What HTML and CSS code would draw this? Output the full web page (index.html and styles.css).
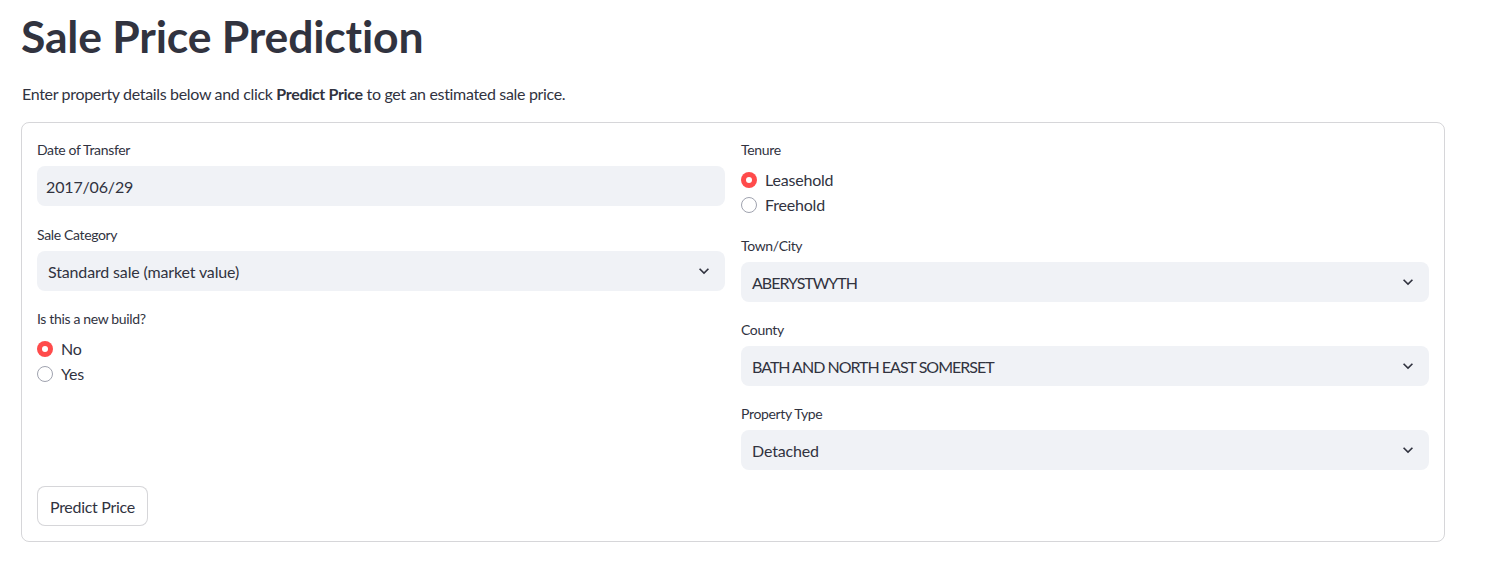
FILE: index.html
```html
<!DOCTYPE html>
<html lang="en">
<head>
<meta charset="utf-8">
<title>Sale Price Prediction</title>
<link rel="stylesheet" href="styles.css">
</head>
<body>
<main class="page">
  <h1 class="title">Sale Price Prediction</h1>
  <p class="intro">Enter property details below and click <strong>Predict Price</strong> to get an estimated sale price.</p>
  <form class="form-card">
    <div class="columns">
      <div class="col">
        <div class="field field-date">
          <div class="label">Date of Transfer</div>
          <div class="input input-date">2017/06/29</div>
        </div>
        <div class="field">
          <div class="label">Sale Category</div>
          <div class="input select">
            <span>Standard sale (market value)</span>
            <svg class="chev" viewBox="0 0 24 24" width="20" height="20"><path d="M16.59 8.59L12 13.17 7.41 8.59 6 10l6 6 6-6z"/></svg>
          </div>
        </div>
        <div class="field">
          <div class="label">Is this a new build?</div>
          <div class="options">
            <div class="option"><span class="radio checked"></span><span>No</span></div>
            <div class="option"><span class="radio"></span><span>Yes</span></div>
          </div>
        </div>
      </div>
      <div class="col">
        <div class="field">
          <div class="label">Tenure</div>
          <div class="options">
            <div class="option"><span class="radio checked"></span><span>Leasehold</span></div>
            <div class="option"><span class="radio"></span><span>Freehold</span></div>
          </div>
        </div>
        <div class="field">
          <div class="label">Town/City</div>
          <div class="input select">
            <span class="caps">ABERYSTWYTH</span>
            <svg class="chev" viewBox="0 0 24 24" width="20" height="20"><path d="M16.59 8.59L12 13.17 7.41 8.59 6 10l6 6 6-6z"/></svg>
          </div>
        </div>
        <div class="field">
          <div class="label">County</div>
          <div class="input select">
            <span class="caps">BATH AND NORTH EAST SOMERSET</span>
            <svg class="chev" viewBox="0 0 24 24" width="20" height="20"><path d="M16.59 8.59L12 13.17 7.41 8.59 6 10l6 6 6-6z"/></svg>
          </div>
        </div>
        <div class="field">
          <div class="label">Property Type</div>
          <div class="input select">
            <span>Detached</span>
            <svg class="chev" viewBox="0 0 24 24" width="20" height="20"><path d="M16.59 8.59L12 13.17 7.41 8.59 6 10l6 6 6-6z"/></svg>
          </div>
        </div>
      </div>
    </div>
    <div class="actions">
      <button type="button" class="btn">Predict Price</button>
    </div>
  </form>
</main>
</body>
</html>
```

FILE: styles.css
```css
* {
  box-sizing: border-box;
}

html, body {
  margin: 0;
  background: #ffffff;
}

body {
  font-family: Lato, "Noto Sans", sans-serif;
  color: rgb(49, 51, 63);
  font-size: 16px;
  letter-spacing: -0.2px;
}

.page {
  padding: 0 50px 0 21px;
}

.title {
  margin: 0;
  padding-top: 10px;
  font-size: 44.5px;
  line-height: 52px;
  font-weight: 700;
  letter-spacing: -0.2px;
}

.intro {
  margin: 20px 0 0 1px;
  line-height: 24px;
  font-size: 16px;
  letter-spacing: -0.33px;
}

.intro strong {
  font-weight: 700;
}

.form-card {
  margin-top: 16px;
  border: 1px solid rgba(49, 51, 63, 0.2);
  border-radius: 8px;
  padding: 15px;
  display: flex;
  flex-direction: column;
  gap: 16px;
}

.columns {
  display: grid;
  grid-template-columns: 1fr 1fr;
  gap: 16px;
  align-items: start;
}

.col {
  display: flex;
  flex-direction: column;
  gap: 16px;
}

.field-date {
  margin-bottom: 1px;
}

.label {
  height: 28px;
  font-size: 14px;
  line-height: 24px;
  letter-spacing: -0.35px;
}

.input {
  height: 40px;
  background: #f0f2f6;
  border-radius: 8px;
  display: flex;
  align-items: center;
  font-size: 16px;
  letter-spacing: -0.15px;
}

.input-date {
  padding-left: 9px;
}

.select {
  padding: 0 11px 0 11px;
  justify-content: space-between;
}

.caps {
  letter-spacing: -1px;
}

.chev {
  fill: rgb(49, 51, 63);
  display: block;
}

.options {
  padding: 1px 0;
  display: flex;
  flex-direction: column;
}

.option {
  height: 25px;
  display: flex;
  align-items: center;
  gap: 8px;
  font-size: 16px;
}

.radio {
  width: 16px;
  height: 16px;
  border-radius: 50%;
  border: 1px solid rgb(160, 163, 175);
  background: #ffffff;
  flex: none;
  display: flex;
  align-items: center;
  justify-content: center;
}

.radio.checked {
  border: none;
  background: rgb(255, 75, 75);
}

.radio.checked::after {
  content: "";
  width: 6px;
  height: 6px;
  border-radius: 50%;
  background: #ffffff;
}

.actions {
  display: flex;
}

.btn {
  height: 40px;
  padding: 0 12px;
  border: 1px solid rgba(49, 51, 63, 0.2);
  border-radius: 8px;
  background: #ffffff;
  color: rgb(49, 51, 63);
  font-family: inherit;
  font-size: 16px;
  letter-spacing: -0.3px;
}
```
